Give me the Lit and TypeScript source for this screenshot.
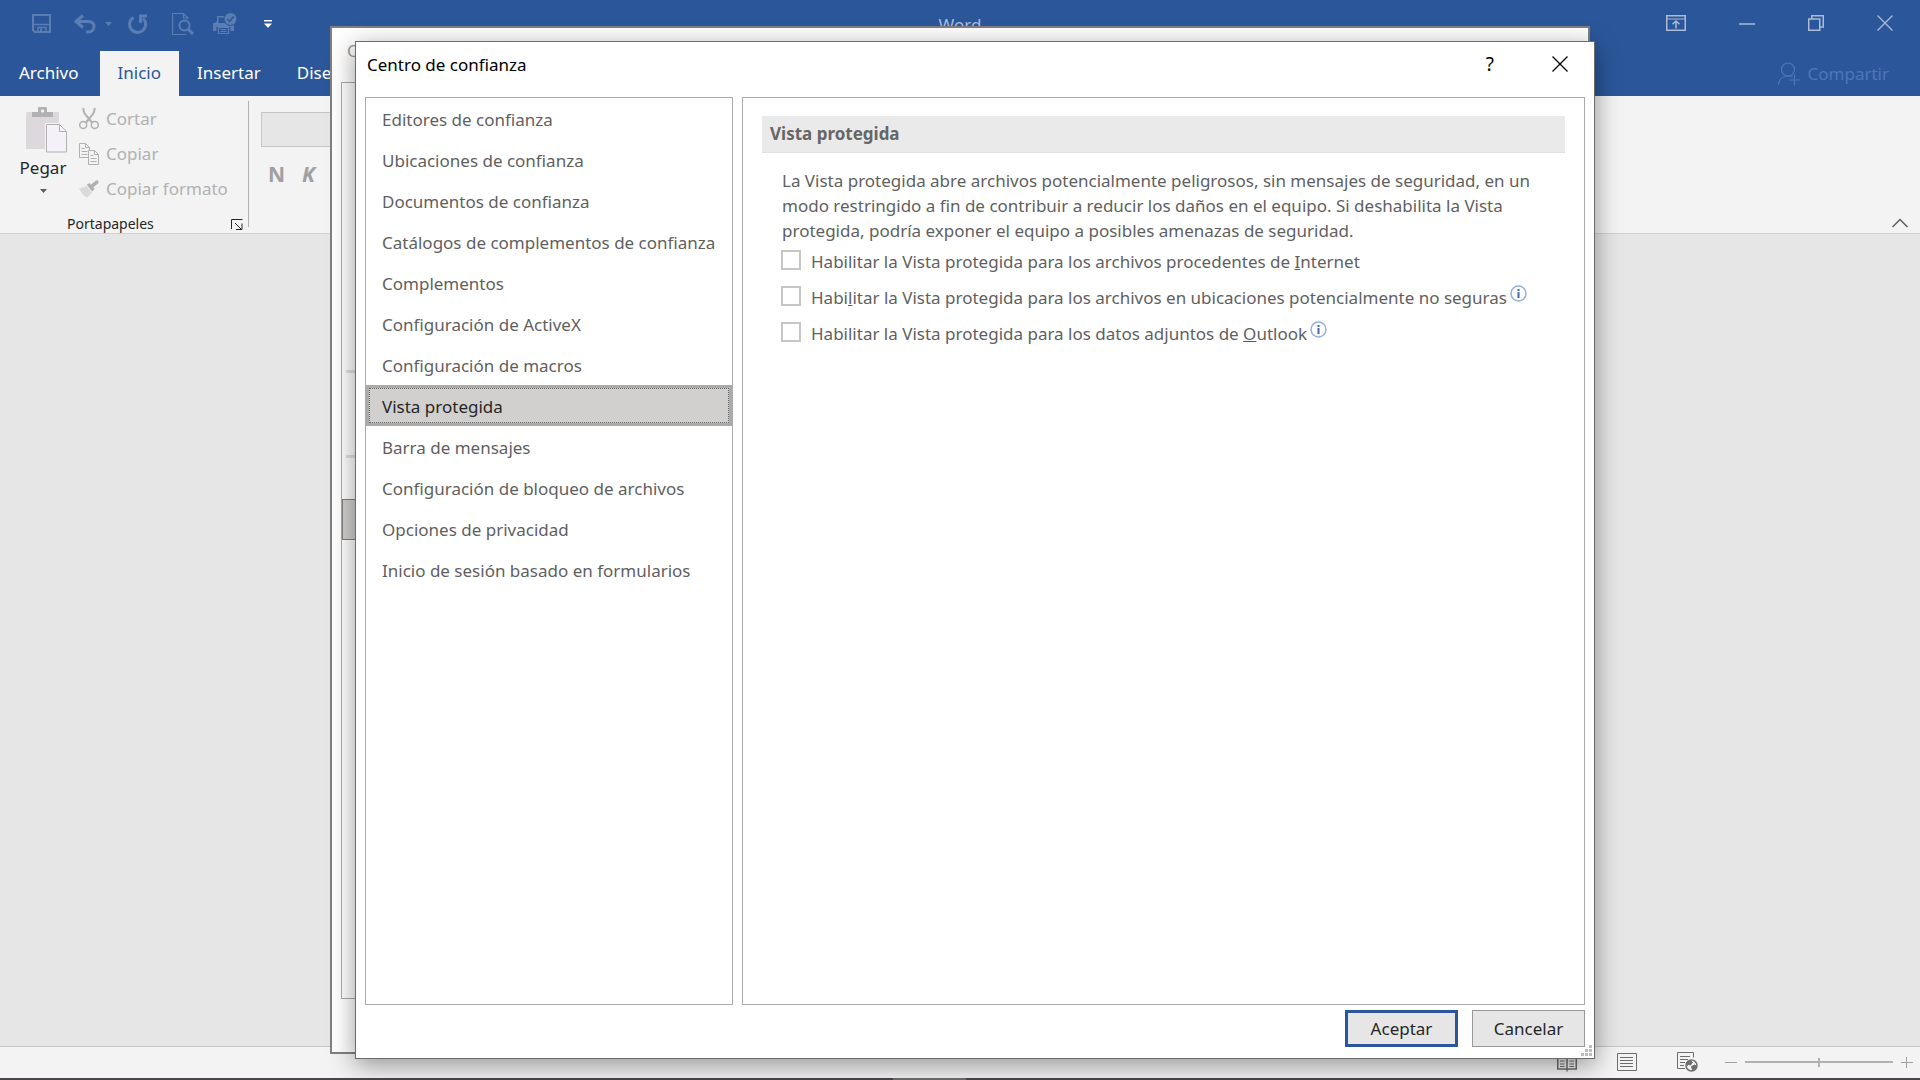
import { LitElement, html, css, svg, nothing } from "lit";
import { customElement, state } from "lit/decorators.js";

interface Option {
  id: string;
  before: string;
  key: string;
  after: string;
  info: boolean;
}

const NAV: string[] = [
  "Editores de confianza",
  "Ubicaciones de confianza",
  "Documentos de confianza",
  "Catálogos de complementos de confianza",
  "Complementos",
  "Configuración de ActiveX",
  "Configuración de macros",
  "Vista protegida",
  "Barra de mensajes",
  "Configuración de bloqueo de archivos",
  "Opciones de privacidad",
  "Inicio de sesión basado en formularios",
];

const OPTIONS: Option[] = [
  { id: "internet", before: "Habilitar la Vista protegida para los archivos procedentes de ", key: "I", after: "nternet", info: false },
  { id: "unsafe", before: "Habi", key: "l", after: "itar la Vista protegida para los archivos en ubicaciones potencialmente no seguras", info: true },
  { id: "outlook", before: "Habilitar la Vista protegida para los datos adjuntos de ", key: "O", after: "utlook", info: true },
];

const saveIcon = svg`<svg width="20" height="20" viewBox="0 0 20 20" fill="none" stroke="currentColor" stroke-width="2">
  <path d="M1 1h17v17H3l-2-2z"/><path d="M2 10.500h16" stroke-width="1.500"/><path d="M6 18v-4.500h8V18" stroke-width="1.500"/><path d="M9 14.500V18"/></svg>`;
const undoIcon = svg`<svg width="22" height="20" viewBox="0 0 22 20" fill="none" stroke="currentColor" stroke-width="3">
  <path d="M9 1.500L2 7.500l7 6"/><path d="M3 7.500h11c4 0 6 2 6 5s-2 5.500-6 5.500h-2"/></svg>`;
const redoIcon = svg`<svg width="20" height="20" viewBox="0 0 20 20" fill="none" stroke="currentColor" stroke-width="3">
  <path d="M5.500 3.500a8 8 0 1 0 9.500 1"/><path d="M19 2h-6.500v7" /></svg>`;
const previewIcon = svg`<svg width="22" height="22" viewBox="0 0 22 22" fill="none" stroke="currentColor">
  <path d="M16 6V5l-4.500-4.500H.5v21H14M11.500 .5V5H16" stroke-width="1.200"/><circle cx="12.500" cy="12.500" r="5" stroke-width="2"/><path d="M16 16l5 5" stroke-width="3"/></svg>`;
const printIcon = svg`<svg width="24" height="22" viewBox="0 0 24 22">
  <path d="M4.750 10V3.750h8" fill="none" stroke="currentColor" stroke-width="1.500"/>
  <path d="M0 10h2.500V8.500H4V10h13V8.500h1.500V10H21v8h-3.500v-4h-14v4H0z" fill="currentColor"/>
  <path d="M5.500 14.500h10v6h-10z" fill="#2b579a" stroke="currentColor" stroke-width="1.200"/><path d="M7.500 16.500h6M7.500 18.500h6" stroke="currentColor"/>
  <circle cx="17.500" cy="6" r="7" fill="#2b579a"/><circle cx="17.500" cy="6" r="6" fill="currentColor"/>
  <path d="M14.500 6l2.200 2.500L20.500 3.500" fill="none" stroke="#2b579a" stroke-width="1.500"/></svg>`;
const customizeIcon = svg`<svg width="8" height="8" viewBox="0 0 8 8" fill="currentColor"><path d="M0 0h8v1.500H0zM0 3.500h8L4 8z"/></svg>`;
const caretIcon = svg`<svg width="7" height="4" viewBox="0 0 7 4" fill="currentColor"><path d="M0 0h7L3.500 4z"/></svg>`;

const ribbonIcon = svg`<svg width="20" height="16" viewBox="0 0 20 16" fill="none" stroke="currentColor">
  <path d="M.75 .75h18.500v14.500H.75z" stroke-width="1.500"/><path d="M1 4h18"/><path d="M10 13.500V6M6.500 9.300L10 6l3.500 3.300" stroke-width="1.500"/></svg>`;
const minimizeIcon = svg`<svg width="16" height="16" viewBox="0 0 16 16" stroke="currentColor" stroke-width="1.500"><path d="M0 9h16"/></svg>`;
const restoreIcon = svg`<svg width="16" height="16" viewBox="0 0 16 16" fill="none" stroke="currentColor" stroke-width="1.500">
  <path d="M.75 4h11v11.250h-11z"/><path d="M3.800 4V.75h11.450v11.250h-3.500"/></svg>`;
const closeIcon = svg`<svg width="16" height="16" viewBox="0 0 16 16" stroke="currentColor" stroke-width="1.300"><path d="M.5 .5l15 15M15.500 .5l-15 15"/></svg>`;
const personIcon = svg`<svg width="22" height="24" viewBox="0 0 22 24" fill="none" stroke="currentColor" stroke-width="1.200">
  <circle cx="10" cy="7.500" r="6.500"/><path d="M.5 22.500c.5-5 4-8.500 9.500-8.500 2 0 3.500.4 4.500 1M11 18h11M16.500 12.500V23.500"/></svg>`;
const chevronIcon = svg`<svg width="16" height="10" viewBox="0 0 16 10" fill="none" stroke="currentColor" stroke-width="1.500"><path d="M.5 9L8 1.500 15.500 9"/></svg>`;

const pasteIcon = svg`<svg width="42" height="46" viewBox="0 0 42 46">
  <rect x="0" y="5" width="33" height="37" rx="1.500" fill="#dcd8db"/>
  <path d="M6 5h6V1.500C12 .5 12.500 0 13.500 0h6c1 0 1.500.5 1.500 1.500V5h6v5H6z" fill="#b1b1b1"/><circle cx="16.500" cy="4" r="1.700" fill="#f3f3f3"/>
  <path d="M19 16h16l7 7v23H19z" fill="#f3f3f3"/>
  <path d="M20.500 17.500h13l7 7v20.500h-20z" fill="#f5f1f8" stroke="#b1b1b1"/><path d="M33.500 17.500v7h7" fill="none" stroke="#b1b1b1"/></svg>`;
const cutIcon = svg`<svg width="20" height="22" viewBox="0 0 20 22" fill="none" stroke="#b1b1b1">
  <path d="M4.500 0c-.5 3 1.500 6.500 4 9l4.500 5.500M15.500 0c.5 3-1.500 6.500-4 9L7 14.500" stroke-width="2"/>
  <circle cx="4.200" cy="17" r="3.500" stroke-width="1.500"/><circle cx="15.800" cy="17" r="3.500" stroke-width="1.500"/></svg>`;
const copyIcon = svg`<svg width="20" height="22" viewBox="0 0 20 22" fill="#f3f3f3" stroke="#b1b1b1">
  <path d="M.5 .5h6l4 4v10H.5z"/><path d="M6.500 .5v4h4M2.500 5.500h3M2.500 8.500h6M2.500 11.500h6" fill="none"/>
  <path d="M9.500 7.500h6l4 4v10h-10z"/><path d="M15.500 7.500v4h4M11.500 12.500h3M11.500 15.500h6M11.500 18.500h6" fill="none"/></svg>`;
const brushIcon = svg`<svg width="23" height="20" viewBox="0 0 23 20">
  <path d="M0 9c3 0 6-1 8-3l7 8-6 6C5 18 2 13 0 9z" fill="#dcd8db"/>
  <path d="M9 5l3-2 6 7-3 3z" fill="#b1b1b1"/><path d="M14.500 7l6-5" stroke="#b1b1b1" stroke-width="4" stroke-linecap="round"/></svg>`;
const launcherIcon = svg`<svg width="12" height="11" viewBox="0 0 12 11" fill="none" stroke="currentColor"><path d="M.5 10V.5h11M4 4l6 6M11 4.500v6H5"/></svg>`;
const infoIcon = svg`<svg width="17" height="17" viewBox="0 0 17 17"><circle cx="8.500" cy="8.500" r="7.500" fill="#fff" stroke="#94b0dc" stroke-width="1.500"/>
  <path d="M7.500 4h2v2h-2zM7.500 7h2v6h-2z" fill="#3f6db0"/></svg>`;
const gripIcon = svg`<svg width="11" height="11" viewBox="0 0 11 11" fill="#bdbdbd"><path d="M8 0h3v3H8zM4 4h3v3H4zM8 4h3v3H8zM0 8h3v3H0zM4 8h3v3H4zM8 8h3v3H8z"/></svg>`;

const readIcon = svg`<svg width="20" height="20" viewBox="0 0 20 20" fill="none" stroke="currentColor" stroke-width="1.500">
  <path d="M.75 2.500h8l1.250 1 1.250-1h8v14.500h-8l-1.250 1-1.250-1h-8zM10 3.500v16"/><path d="M3 6h4.500M3 9h4.500M3 12h4.500M3 14.500h4.500M12.500 6H17M12.500 9H17M12.500 12H17M12.500 14.500H17" stroke-width="1"/></svg>`;
const printLayoutIcon = svg`<svg width="20" height="18" viewBox="0 0 20 18" fill="none" stroke="currentColor">
  <path d="M.5 .5h19v17H.5zM3 4.500h13M3 7.500h13M3 10.500h13M3 13.500h13"/></svg>`;
const webLayoutIcon = svg`<svg width="21" height="20" viewBox="0 0 21 20" fill="none" stroke="currentColor">
  <path d="M8 16.500H.5V.5h16v5M3 4.500h10M3 7.500h8M3 10.500h5M3 13.500h4"/>
  <circle cx="14.500" cy="13.500" r="5.500" fill="#f3f3f3" stroke-width="1.500"/><path d="M10 10.500l4-1.500 1.500 1.500-2 2.500-2-.5-1.500 1zM14.500 14.500l3-1.500 2 1-1.500 3-2.500 1z" fill="currentColor"/></svg>`;
const minusIcon = svg`<svg width="12" height="12" viewBox="0 0 12 12" stroke="currentColor"><path d="M0 6.500h12"/></svg>`;
const plusIcon = svg`<svg width="12" height="12" viewBox="0 0 12 12" stroke="currentColor"><path d="M0 6.500h12M5.500 1v11"/></svg>`;

@customElement("app-root")
export class AppRoot extends LitElement {
  @state() private selected = 7;

  static styles = css`
    :host {
      display: block;
      height: 100vh;
      font-family: "Segoe UI", "Noto Sans", "Open Sans", sans-serif;
      font-size: 17px;
      line-height: 25px;
      color: #262626;
    }
    * { box-sizing: border-box; }
    svg { display: block; flex: none; }
    button {
      font: inherit;
      color: inherit;
      background: none;
      border: 0;
      padding: 0;
      margin: 0;
      display: flex;
      align-items: center;
    }
    .app {
      position: relative;
      height: 100%;
      display: flex;
      flex-direction: column;
      background: #e6e6e6;
      overflow: hidden;
    }

    .titlebar {
      flex: none;
      height: 51px;
      display: grid;
      grid-template-columns: 1fr auto 1fr;
      align-items: center;
      padding-bottom: 3px;
      background: #2b579a;
      color: #aabcd7;
    }
    .quick {
      display: flex;
      align-items: center;
      padding-left: 32px;
      color: #5b7db3;
    }
    .quick .undo { margin-left: 22px; }
    .quick .drop { margin-left: 9px; }
    .quick .redo { margin-left: 16px; }
    .quick .preview { margin-left: 24px; }
    .quick .print { margin-left: 19px; }
    .quick .more { margin-left: 27px; color: #fff; }
    .window-buttons {
      display: flex;
      justify-content: flex-end;
      align-items: center;
      gap: 53px;
      padding: 0 27px 2px 0;
      color: #aabcd7;
    }

    .tabs {
      flex: none;
      height: 45px;
      display: flex;
      padding-left: 1px;
      background: #2b579a;
      color: #fff;
    }
    .tab { padding: 0 18px 2px; }
    .tab.file { margin-right: 3px; }
    .tab.active { background: #f3f3f3; color: #2b579a; }
    .share {
      margin-left: auto;
      margin-right: 31px;
      gap: 8px;
      color: #4c78b8;
    }

    .ribbon {
      flex: none;
      height: 138px;
      display: flex;
      background: #f3f3f3;
      border-bottom: 1px solid #d2d2d2;
    }
    .group {
      display: grid;
      grid-template: 107px 1fr / 74px 1fr;
      width: 249px;
      margin: 5px 0 6px;
      border-right: 1px solid #b1b1b1;
    }
    .paste {
      flex-direction: column;
      padding: 6px 0 0 12px;
      justify-content: flex-start;
      gap: 2px;
    }
    .paste-art { padding-left: 7px; }
    .paste-arrow { color: #5d5d5d; padding-top: 7px; }
    .clip {
      display: flex;
      flex-direction: column;
      padding: 5px 0 0 5px;
      gap: 10px;
      color: #b1b1b1;
    }
    .clip button { gap: 7px; }
    .clip svg { width: 20px; overflow: visible; }
    .group-foot {
      grid-column: 1 / 3;
      display: flex;
      align-items: center;
      justify-content: flex-end;
      padding: 6px 5px 0 0;
      font-size: 14px;
      line-height: 20px;
    }
    .group-foot span { margin-right: auto; padding-left: 67px; }
    .font-group { padding: 16px 12px; flex: none; width: 200px; }
    .font-name {
      display: block;
      width: 160px;
      height: 35px;
      border: 1px solid #c6c6c6;
      border-radius: 0;
      background: #e6e6e6;
    }
    .styles {
      display: flex;
      gap: 17px;
      padding: 15px 7px;
      font-size: 21px;
      font-weight: 700;
      color: #a0a0a0;
    }
    .collapse { margin: auto 12px 5px auto; color: #5d5d5d; }

    .canvas { flex: 1; }
    .status {
      flex: none;
      height: 32px;
      display: flex;
      align-items: center;
      justify-content: flex-end;
      padding: 0 7px 1px 0;
      background: #f3f3f3;
      border-top: 1px solid #c6c6c6;
      color: #6d6d6d;
    }
    .status .layout { margin-left: 40px; }
    .zoom {
      display: flex;
      align-items: center;
      gap: 8px;
      margin-left: 27px;
      color: #a0a0a0;
    }
    .slider {
      appearance: none;
      width: 148px;
      height: 2px;
      margin: 0;
      background: #b1b1b1;
    }
    .slider::-webkit-slider-thumb {
      appearance: none;
      width: 2px;
      height: 9px;
      background: #b1b1b1;
    }
    .taskbar {
      flex: none;
      height: 2px;
      padding-left: 46.5%;
      background: #484648;
    }
    .task { width: 73px; height: 2px; background: #6f6f6f; }

    .window { position: absolute; background: #fff; }
    .options {
      inset: 26px 330px 26px 330px;
      border: 2px solid #808080;
      padding: 0 9px 53px;
      display: flex;
      flex-direction: column;
    }
    .options-title { padding: 10px 6px 19px; color: #999; }
    .options-nav {
      flex: 1;
      width: 300px;
      border: 1px solid #ababab;
      display: flex;
      flex-direction: column;
    }
    .rule { height: 3px; margin: 0 4px; background: #e1e1e1; }
    .rule.first { margin-top: 287px; }
    .rule.second { margin-top: 82px; }
    .options-current {
      margin-top: 41px;
      height: 41px;
      border: 1px solid #808080;
      background: #d2d0ce;
    }

    .trust {
      inset: 41px 325px 21px 355px;
      border: 1px solid #6b6b6b;
      padding: 0 9px;
      display: flex;
      flex-direction: column;
      box-shadow: 0 6px 24px rgba(0, 0, 0, 0.4);
    }
    .trust-title {
      height: 55px;
      flex: none;
      display: flex;
      align-items: flex-start;
      padding: 10px 17px 0 2px;
      color: #000;
    }
    h1, h2, p { margin: 0; font-size: inherit; font-weight: 400; }
    .trust-title h1 { flex: 1; }
    .help { margin-right: 58px; font-size: 19px; }
    .trust-title .close { height: 24px; }
    .panes { flex: 1; display: flex; gap: 9px; min-height: 0; }
    .nav {
      flex: none;
      width: 368px;
      border: 1px solid #ababab;
      color: #5f5f5f;
    }
    .nav button {
      width: 100%;
      height: 41px;
      padding: 1px 16px 0;
      white-space: nowrap;
    }
    .nav button.selected {
      border: 3px solid #ababab;
      outline: 1px dotted #666;
      outline-offset: -4px;
      padding: 1px 13px 0;
      background: #d2d0ce;
      color: #262626;
    }
    .page {
      flex: 1;
      border: 1px solid #ababab;
      padding: 18px 19px;
      color: #5f5f5f;
    }
    .page h2 {
      height: 37px;
      padding: 5px 8px;
      background: #eaeaea;
      border-bottom: 1px solid #e1e1e1;
      font-weight: 700;
      color: #666;
    }
    .page p { padding: 15px 24px 0 20px; }
    .choices { display: grid; gap: 11px; padding: 6px 19px; }
    .choice { display: flex; align-items: center; height: 25px; }
    .choice input {
      appearance: none;
      flex: none;
      width: 20px;
      height: 20px;
      margin: 0 10px 4px 0;
      border: 2px solid #c6c6c6;
      background: #fff;
    }
    .choice svg { margin: 0 0 8px 3px; }
    .actions {
      flex: none;
      display: flex;
      justify-content: flex-end;
      gap: 14px;
      padding: 5px 0 11px;
    }
    .actions button {
      width: 113px;
      height: 37px;
      justify-content: center;
      background: #e6e6e6;
      border: 1px solid #999;
    }
    .actions .primary { border: 3px solid #2b579a; }
    .grip { position: absolute; right: 2px; bottom: 2px; }
  `;

  render() {
    return html`
      <div class="app">
        <header class="titlebar">
          <div class="quick">
            <button aria-label="Guardar">${saveIcon}</button>
            <button class="undo" aria-label="Deshacer">${undoIcon}</button>
            <button class="drop" aria-label="Más acciones">${caretIcon}</button>
            <button class="redo" aria-label="Repetir">${redoIcon}</button>
            <button class="preview" aria-label="Vista previa">${previewIcon}</button>
            <button class="print" aria-label="Impresión rápida">${printIcon}</button>
            <button class="more" aria-label="Personalizar">${customizeIcon}</button>
          </div>
          <span>Word</span>
          <div class="window-buttons">
            <button aria-label="Opciones de cinta">${ribbonIcon}</button>
            <button aria-label="Minimizar">${minimizeIcon}</button>
            <button aria-label="Restaurar">${restoreIcon}</button>
            <button aria-label="Cerrar">${closeIcon}</button>
          </div>
        </header>
        <nav class="tabs">
          <button class="tab file">Archivo</button>
          <button class="tab active">Inicio</button>
          <button class="tab">Insertar</button>
          <button class="tab">Dise</button>
          <button class="share">${personIcon}Compartir</button>
        </nav>
        <section class="ribbon">
          <div class="group">
            <button class="paste">
              <span class="paste-art">${pasteIcon}</span>
              <span>Pegar</span>
              <span class="paste-arrow">${caretIcon}</span>
            </button>
            <div class="clip">
              <button>${cutIcon}Cortar</button>
              <button>${copyIcon}Copiar</button>
              <button>${brushIcon}Copiar formato</button>
            </div>
            <div class="group-foot"><span>Portapapeles</span><button aria-label="Abrir Portapapeles">${launcherIcon}</button></div>
          </div>
          <div class="font-group">
            <input class="font-name" aria-label="Fuente" disabled />
            <div class="styles"><button>N</button><button><i>K</i></button></div>
          </div>
          <button class="collapse" aria-label="Contraer la cinta">${chevronIcon}</button>
        </section>
        <main class="canvas"></main>
        <footer class="status">
          <button aria-label="Modo de lectura">${readIcon}</button>
          <button class="layout" aria-label="Diseño de impresión">${printLayoutIcon}</button>
          <button class="layout" aria-label="Diseño web">${webLayoutIcon}</button>
          <div class="zoom">
            <button aria-label="Alejar">${minusIcon}</button>
            <input class="slider" type="range" min="0" max="100" .value=${"50"} aria-label="Zoom" />
            <button aria-label="Acercar">${plusIcon}</button>
          </div>
        </footer>
        <div class="taskbar"><div class="task"></div></div>

        <div class="window options">
          <div class="options-title">O</div>
          <div class="options-nav">
            <div class="rule first"></div>
            <div class="rule second"></div>
            <div class="options-current"></div>
          </div>
        </div>

        <div class="window trust" role="dialog" aria-labelledby="trust-title">
          <header class="trust-title">
            <h1 id="trust-title">Centro de confianza</h1>
            <button class="help" aria-label="Ayuda">?</button>
            <button class="close" aria-label="Cerrar">${closeIcon}</button>
          </header>
          <div class="panes">
            <nav class="nav">
              ${NAV.map(
                (label, i) => html`<button
                  class=${i === this.selected ? "selected" : ""}
                  @click=${() => (this.selected = i)}
                >${label}</button>`
              )}
            </nav>
            <section class="page">
              <h2>Vista protegida</h2>
              <p>
                La Vista protegida abre archivos potencialmente peligrosos, sin mensajes de seguridad, en un
                modo restringido a fin de contribuir a reducir los daños en el equipo. Si deshabilita la Vista
                protegida, podría exponer el equipo a posibles amenazas de seguridad.
              </p>
              <div class="choices">
                ${OPTIONS.map(
                  (o) => html`<div class="choice">
                    <input type="checkbox" id=${o.id} />
                    <label for=${o.id}>${o.before}<u>${o.key}</u>${o.after}</label>
                    ${o.info ? infoIcon : nothing}
                  </div>`
                )}
              </div>
            </section>
          </div>
          <footer class="actions">
            <button class="primary">Aceptar</button>
            <button>Cancelar</button>
          </footer>
          <div class="grip">${gripIcon}</div>
        </div>
      </div>
    `;
  }
}
